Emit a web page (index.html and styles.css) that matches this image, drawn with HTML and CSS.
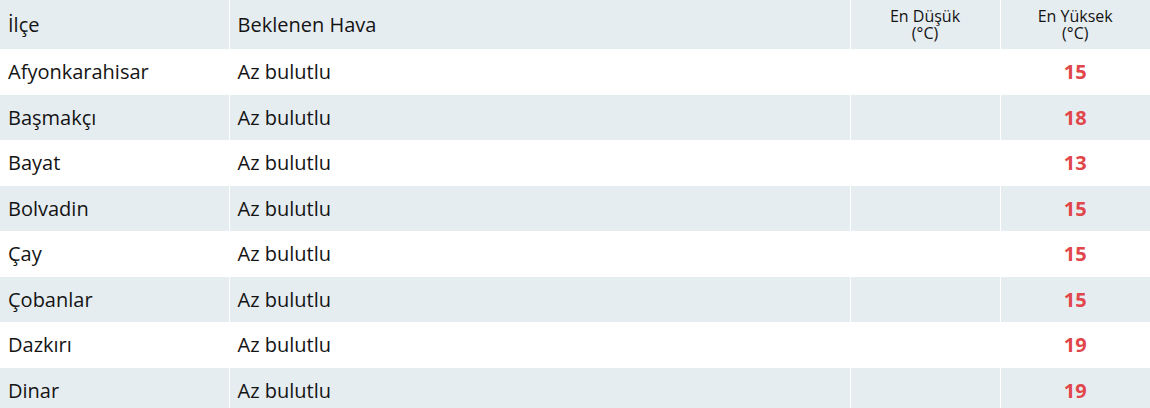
FILE: index.html
```html
<!DOCTYPE html>
<html lang="tr">
<head>
<meta charset="utf-8">
<link rel="stylesheet" href="styles.css">
</head>
<body>
<table class="weather">
  <thead>
    <tr class="head">
      <th class="c-name">İlçe</th>
      <th class="c-desc">Beklenen Hava</th>
      <th class="c-temp small">En Düşük<br>(°C)</th>
      <th class="c-temp small">En Yüksek<br>(°C)</th>
    </tr>
  </thead>
  <tbody>
    <tr><td class="c-name">Afyonkarahisar</td><td class="c-desc">Az bulutlu</td><td class="c-temp"></td><td class="c-temp max">15</td></tr>
    <tr><td class="c-name">Başmakçı</td><td class="c-desc">Az bulutlu</td><td class="c-temp"></td><td class="c-temp max">18</td></tr>
    <tr><td class="c-name">Bayat</td><td class="c-desc">Az bulutlu</td><td class="c-temp"></td><td class="c-temp max">13</td></tr>
    <tr><td class="c-name">Bolvadin</td><td class="c-desc">Az bulutlu</td><td class="c-temp"></td><td class="c-temp max">15</td></tr>
    <tr><td class="c-name">Çay</td><td class="c-desc">Az bulutlu</td><td class="c-temp"></td><td class="c-temp max">15</td></tr>
    <tr><td class="c-name">Çobanlar</td><td class="c-desc">Az bulutlu</td><td class="c-temp"></td><td class="c-temp max">15</td></tr>
    <tr><td class="c-name">Dazkırı</td><td class="c-desc">Az bulutlu</td><td class="c-temp"></td><td class="c-temp max">19</td></tr>
    <tr><td class="c-name">Dinar</td><td class="c-desc">Az bulutlu</td><td class="c-temp"></td><td class="c-temp max">19</td></tr>
  </tbody>
</table>
</body>
</html>
```
FILE: styles.css
```css
html, body {
  margin: 0;
  padding: 0;
  background: #ffffff;
}
body {
  font-family: "Open Sans", "Noto Sans", sans-serif;
  color: #141414;
}
.weather {
  width: 1150px;
  border-collapse: collapse;
  table-layout: fixed;
}
.weather th,
.weather td {
  padding: 1px 8px 0;
  font-size: 20px;
  line-height: 24px;
  font-weight: 400;
  text-align: left;
  vertical-align: middle;
  border-left: 1px solid #ffffff;
  box-sizing: border-box;
}
.weather th:first-child,
.weather td:first-child {
  border-left: none;
}
.head {
  height: 49px;
  background: #e6edf1;
}
tbody tr {
  height: 45.5px;
}
tbody tr:nth-child(even) {
  background: #e6edf1;
}
.c-name { width: 229px; }
.c-desc { width: 621px; }
.c-temp { width: 150px; }
.weather .c-temp {
  text-align: center;
}
.weather th.small {
  font-size: 16px;
  line-height: 17px;
  padding-top: 0;
}
.weather td.max {
  color: #e0464a;
  font-weight: 700;
}
```
